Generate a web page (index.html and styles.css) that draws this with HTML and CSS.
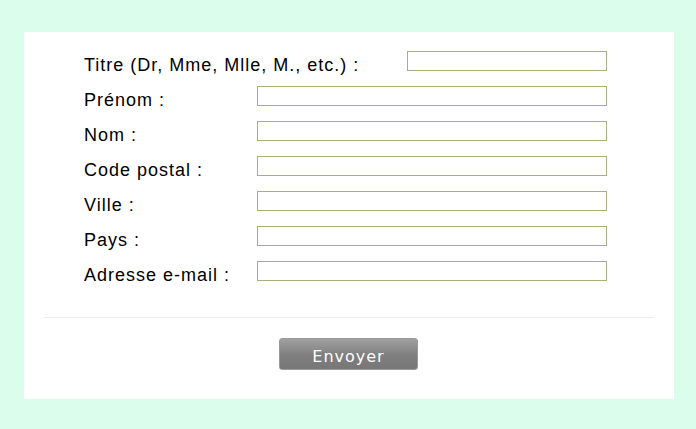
FILE: index.html
```html
<!DOCTYPE html>
<html lang="fr">
<head>
<meta charset="utf-8">
<title>Formulaire</title>
<link rel="stylesheet" href="styles.css">
</head>
<body>
<div class="panel">
  <form class="form">
    <div class="row row-first">
      <label class="label">Titre (Dr, Mme, Mlle, M., etc.) :</label>
      <input class="field field-short" type="text">
    </div>
    <div class="row">
      <label class="label">Prénom :</label>
      <input class="field" type="text">
    </div>
    <div class="row">
      <label class="label">Nom :</label>
      <input class="field" type="text">
    </div>
    <div class="row">
      <label class="label">Code postal :</label>
      <input class="field" type="text">
    </div>
    <div class="row">
      <label class="label">Ville :</label>
      <input class="field" type="text">
    </div>
    <div class="row">
      <label class="label">Pays :</label>
      <input class="field" type="text">
    </div>
    <div class="row">
      <label class="label">Adresse e-mail :</label>
      <input class="field" type="text">
    </div>
  </form>
  <div class="sep"></div>
  <div class="actions">
    <button class="btn" type="button">Envoyer</button>
  </div>
</div>
</body>
</html>
```
FILE: styles.css
```css
html, body {
  margin: 0;
  padding: 0;
}
body {
  background: #dafeeb;
  font-family: Arial, "Liberation Sans", sans-serif;
  padding: 32px 22px 30px 24px;
}
.panel {
  background: #ffffff;
  width: 650px;
  height: 367px;
  box-sizing: border-box;
  padding-top: 19px;
}
.form {
  margin-left: 60px;
  width: 523px;
  display: flex;
  flex-direction: column;
}
.row {
  display: flex;
  align-items: flex-start;
  height: 35px;
}
.label {
  width: 173px;
  flex: none;
  font-size: 18px;
  letter-spacing: 1px;
  line-height: 20px;
  color: #000;
  margin-top: 4px;
  white-space: nowrap;
}
.row-first .label {
  width: auto;
}
.field {
  margin: 0 0 0 auto;
  width: 350px;
  height: 20px;
  box-sizing: border-box;
  border: 1px solid #a9b080;
  padding: 0;
  background: #fff;
}
.field-short {
  width: 200px;
}
.sep {
  margin: 21px 20px 0 20px;
  height: 1px;
  background: #ececec;
}
.actions {
  display: flex;
  justify-content: center;
  padding-top: 20px;
  padding-right: 40px;
}
.btn {
  width: 139px;
  height: 32px;
  margin-left: 39px;
  border: 1px solid #9a9a9a;
  border-radius: 3px;
  background: linear-gradient(#a0a0a0 0%, #8e8e8e 30%, #7e7e7e 55%, #777 100%);
  color: #fff;
  font-family: "DejaVu Sans", Verdana, sans-serif;
  font-size: 16px;
  letter-spacing: 1px;
  padding: 4px 0 0 0;
}
```
